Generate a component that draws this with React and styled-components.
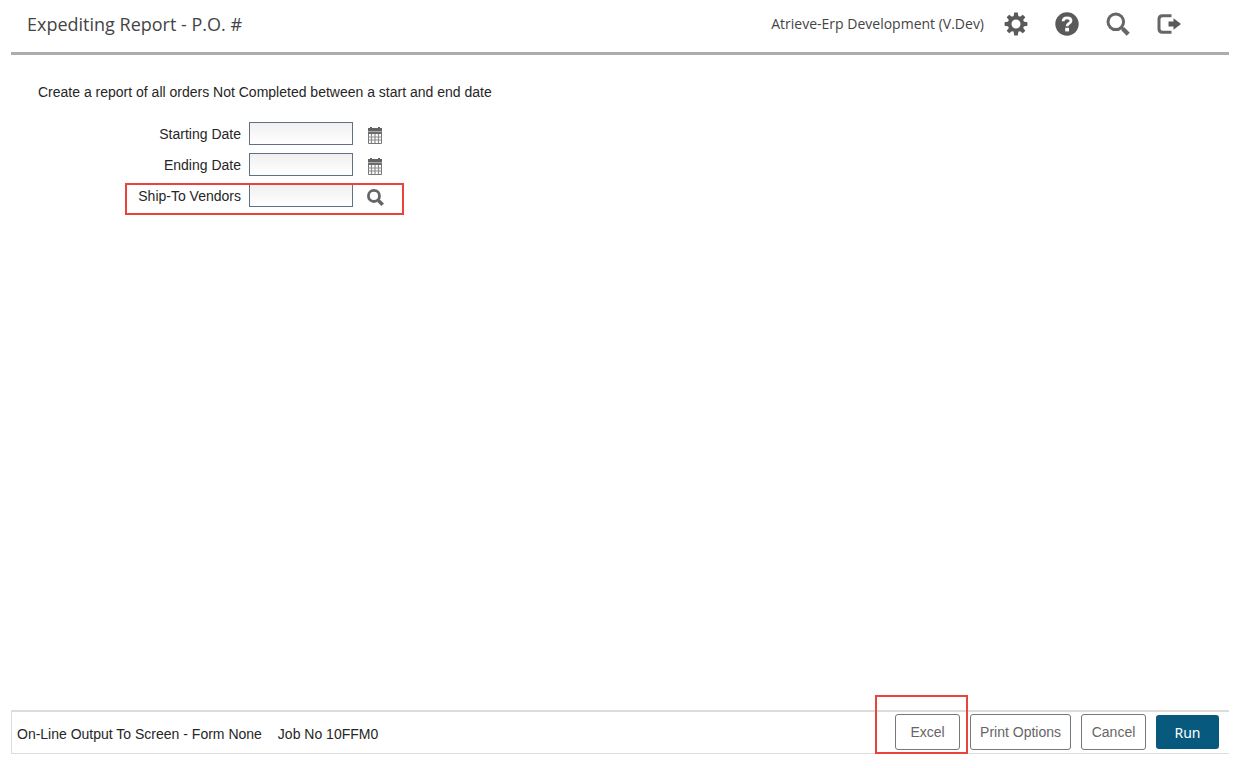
import React from 'react'
import styled, { createGlobalStyle } from 'styled-components'

const GlobalStyle = createGlobalStyle`
 *{
    box-sizing:border-box;
 }
 body{
    margin:0;
    background:#fff;
    color:#262626;
    font-family:"Liberation Sans", Arial, sans-serif;
    font-size:14px;
    line-height:20px;
 }
`

const GearIcon = () => (
    <svg width="24" height="24" viewBox="0 0 24 24" fill="none" stroke="#5a5a5a" aria-hidden="true">
        <circle cx="12" cy="12" r="6.4" strokeWidth="3.8" />
        {[0, 45, 90, 135, 180, 225, 270, 315].map((angle) => (
            <path key={angle} d="M9.6 4.8 10.2.6h3.6l.6 4.2z" fill="#5a5a5a" stroke="none" transform={`rotate(${angle} 12 12)`} />
        ))}
    </svg>
)

const HelpIcon = () => (
    <svg width="24" height="24" viewBox="0 0 24 24" fill="none" aria-hidden="true">
        <circle cx="12" cy="12" r="11.7" fill="#5a5a5a" />
        <path d="M8.1 9.2C8.2 6.8 9.8 5.8 12 5.8c2.3 0 4 1.100 4 3 0 2.700-3.900 2.600-3.900 5.400" stroke="#fff" strokeWidth="2.800" />
        <rect x="10.200" y="15.800" width="3.800" height="3.600" fill="#fff" />
    </svg>
)

const SearchIcon = ({ size, ring, handle }) => (
    <svg width={size} height={size} viewBox="0 0 24 24" fill="none" stroke="#666" aria-hidden="true">
        <circle cx="9.800" cy="9.800" r="7.800" strokeWidth={ring} />
        <path d="m15 15 2.500 2.500" strokeWidth={ring} />
        <path d="m16.800 16.800 5.400 5.400" strokeWidth={handle} />
    </svg>
)

const ExitIcon = () => (
    <svg width="24" height="24" viewBox="0 0 24 24" fill="none" stroke="#666" aria-hidden="true">
        <path d="M14.500 3.800H5.500c-2 0-3.500 1.200-3.500 3.200v10c0 2 1.500 3.200 3.500 3.200h9" strokeWidth="3" />
        <path d="M11.500 9.500h5V6.200L24 12l-7.500 5.800v-3.300h-5z" fill="#5a5a5a" stroke="none" />
    </svg>
)

const CalendarIcon = () => (
    <svg width="16" height="17" viewBox="0 0 16 17" fill="none" aria-hidden="true">
        <path d="M1 1h2V0h2v1h6V0h2v1h2v3H1z" fill="#636363" />
        <path d="M1 4h14v1H1z" fill="#aaa" />
        <path d="M1 5h14v2H1z" fill="#6c6c6c" />
        <path d="M1.500 7v9.500h13V7" stroke="#777" />
        <path d="M4.500 7v9M8 7v9M11.500 7v9M1.500 10h13M1.500 13h13" stroke="#8c8c8c" strokeWidth="1.200" />
    </svg>
)

const tools = [
    { name: 'Settings', icon: <GearIcon /> },
    { name: 'Help', icon: <HelpIcon /> },
    { name: 'Search', icon: <SearchIcon size={24} ring={3} handle={4.4} /> },
    { name: 'Sign out', icon: <ExitIcon /> },
]

const fields = [
    { id: 'startDate', label: 'Starting Date', action: 'Pick starting date', icon: <CalendarIcon /> },
    { id: 'endDate', label: 'Ending Date', action: 'Pick ending date', icon: <CalendarIcon /> },
    { id: 'vendors', label: 'Ship-To Vendors', action: 'Find vendors', icon: <SearchIcon size={17} ring={4} handle={5} />, marked: true },
]

const App = () => (
    <Page>
        <GlobalStyle />
        <Header>
            <Title>Expediting Report - P.O. #</Title>
            <Account>Atrieve-Erp Development (V.Dev)</Account>
            <Tools>
                {tools.map((tool) => (
                    <IconBtn key={tool.name} type="button" aria-label={tool.name}>{tool.icon}</IconBtn>
                ))}
            </Tools>
        </Header>

        <Main>
            <Intro>Create a report of all orders Not Completed between a start and end date</Intro>
            <Form id="report" onSubmit={(e) => e.preventDefault()}>
                {fields.map((field) => (
                    <Row key={field.id}>
                        <Label htmlFor={field.id}>{field.label}</Label>
                        <Input id={field.id} name={field.id} type="text" />
                        <IconBtn type="button" aria-label={field.action}>{field.icon}</IconBtn>
                        {field.marked && <RowMark />}
                    </Row>
                ))}
            </Form>
        </Main>

        <Footer>
            <Status>
                <span>On-Line Output To Screen - Form None</span>
                <span>Job No 10FFM0</span>
            </Status>
            <Actions>
                <Marked>
                    <Btn type="button">Excel</Btn>
                    <BtnMark />
                </Marked>
                <Btn type="button">Print Options</Btn>
                <Btn type="button">Cancel</Btn>
                <RunBtn type="submit" form="report">Run</RunBtn>
            </Actions>
        </Footer>
    </Page>
)

const Page = styled.div`
 display:flex;
 flex-direction:column;
 min-height:100vh;
 padding:0 15px 14px 11px;
`
const Header = styled.header`
 display:flex;
 align-items:center;
 height:55px;
 padding:0 48px 4px 16px;
 border-bottom:3px solid #acacac;
 font-family:"Open Sans", "Noto Sans", sans-serif;
 color:#444;
`
const Title = styled.h1`
 flex:1;
 margin:0;
 font-size:18px;
 font-weight:400;
 line-height:24px;
`
const Account = styled.span`
 font-size:14px;
`
const Tools = styled.div`
 display:flex;
 gap:27px;
 margin-left:20px;
`
const IconBtn = styled.button`
 display:flex;
 align-items:center;
 justify-content:center;
 padding:0;
 border:none;
 background:none;
 cursor:pointer;
`
const Main = styled.main`
 flex:1;
 padding:27px;
`
const Intro = styled.p`
 margin:0 0 20px;
`
const Form = styled.form`
 display:flex;
 flex-direction:column;
 gap:8px;
`
const Row = styled.div`
 position:relative;
 display:grid;
 grid-template-columns:203px 104px 28px;
 align-items:center;
 column-gap:8px;
 width:max-content;
 height:23px;
 & > button{
    padding-top:4px;
 }
`
const Label = styled.label`
 text-align:right;
`
const Input = styled.input`
 width:100%;
 height:23px;
 padding:0 4px;
 border:1px solid #5f7087;
 border-radius:0;
 background:linear-gradient(#f0f0f0, #fff);
 font:inherit;
`
// red frames drawn over the things that are new on this screen
const Mark = styled.span`
 position:absolute;
 border:2px solid #e8443c;
 pointer-events:none;
`
const RowMark = styled(Mark)`
 top:-1px;
 bottom:-8px;
 left:87px;
 right:-15px;
`
const BtnMark = styled(Mark)`
 top:-19px;
 bottom:-4px;
 left:-20px;
 right:-8px;
`
const Footer = styled.footer`
 display:flex;
 align-items:center;
 justify-content:space-between;
 height:44px;
 padding:0 10px 1px 5px;
 border:1px solid #dcdcdc;
 border-top-width:2px;
 border-right:none;
`
const Status = styled.div`
 display:flex;
 gap:16px;
 padding-top:4px;
`
const Actions = styled.div`
 display:flex;
 align-items:center;
 gap:10px;
`
const Marked = styled.div`
 position:relative;
`
const Btn = styled.button`
 height:36px;
 min-width:65px;
 padding:0 9px;
 border:1px solid #777;
 border-radius:3px;
 background:#fff;
 color:#666;
 font-family:inherit;
 font-size:14px;
 cursor:pointer;
`
const RunBtn = styled(Btn)`
 height:34px;
 min-width:63px;
 border:none;
 background:#075a7e;
 color:#fff;
 font-family:"Noto Sans", sans-serif;
`

export default App
